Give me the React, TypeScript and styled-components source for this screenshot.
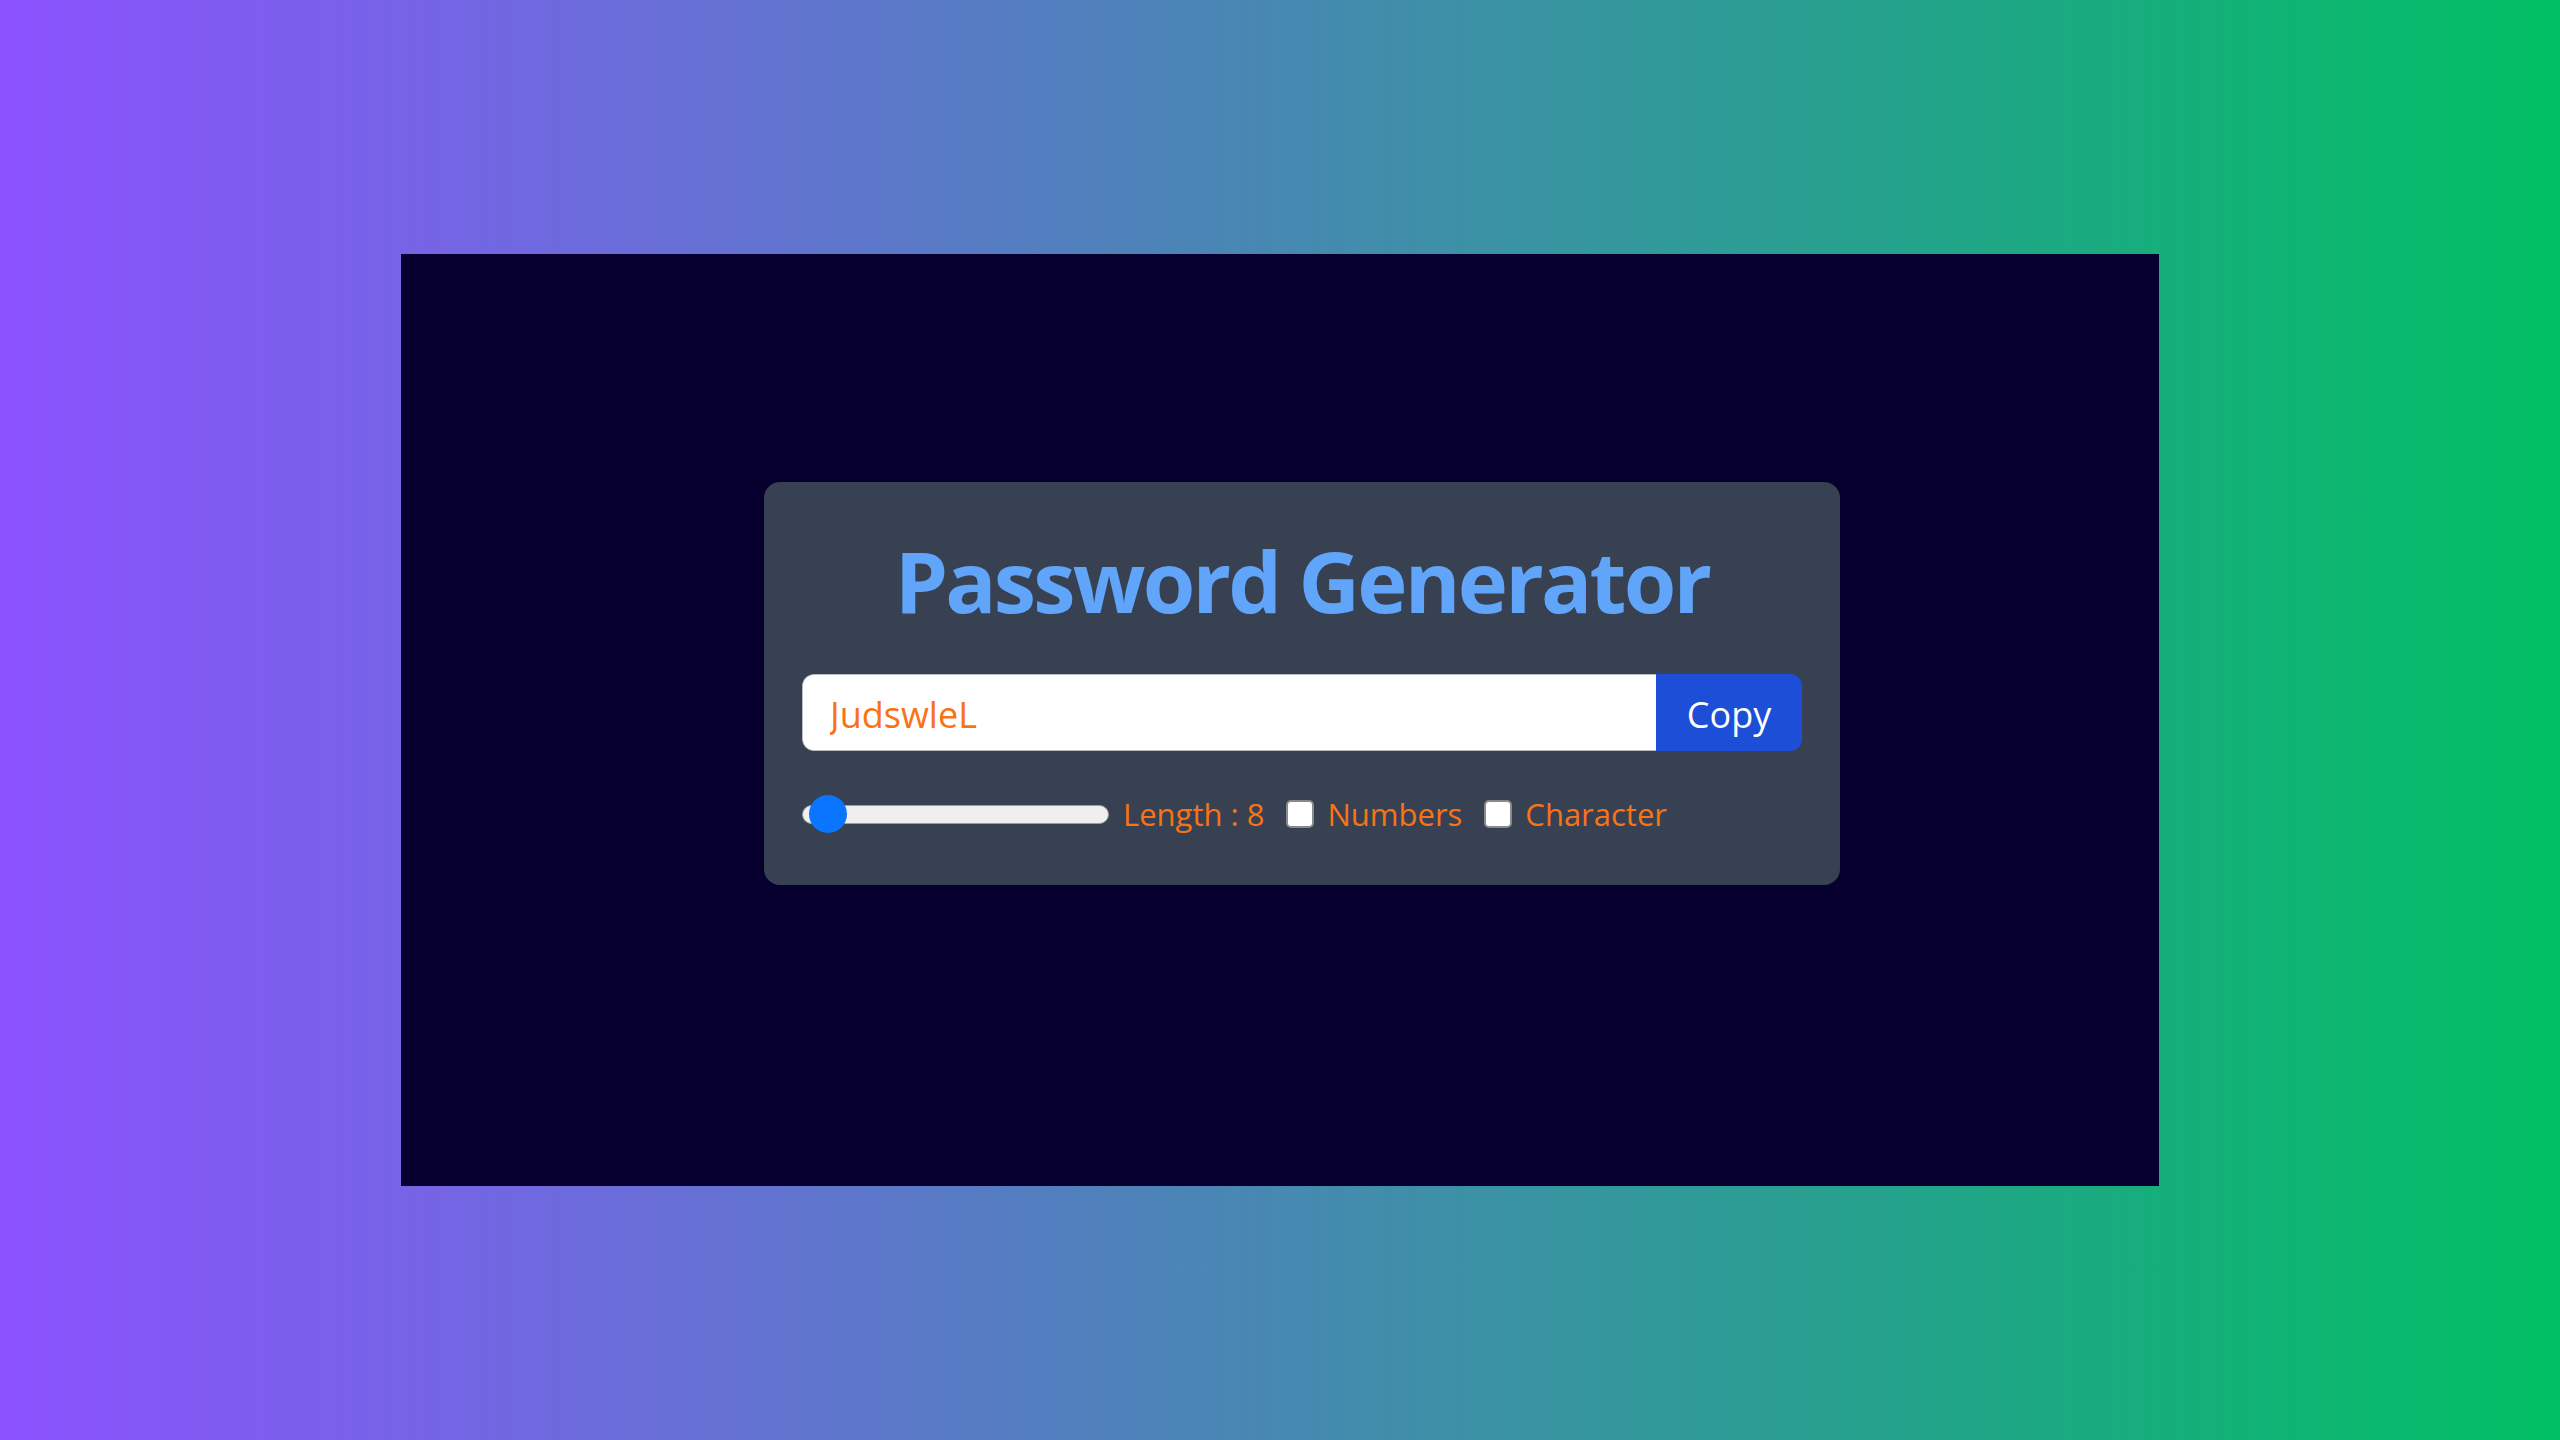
import React from "react";
import styled, { createGlobalStyle } from "styled-components";

const GlobalStyle = createGlobalStyle`
  * {
    box-sizing: border-box;
  }
  body {
    margin: 0;
    font-family: "Open Sans", "Noto Sans", sans-serif;
    background: linear-gradient(90deg, #8c52ff 0%, #00bf63 100%);
    min-height: 100vh;
  }
`;

function App() {
  const [length, setLength] = React.useState(8);
  const [numbers, setNumbers] = React.useState(false);
  const [characters, setCharacters] = React.useState(false);
  const [password] = React.useState("JudswleL");

  return (
    <Page>
      <GlobalStyle />
      <Screen>
        <Card>
          <Title>Password Generator</Title>
          <InputRow>
            <PasswordInput value={password} readOnly placeholder="Password" />
            <CopyButton>Copy</CopyButton>
          </InputRow>
          <Options>
            <Group $gap={14}>
              <Range
                type="range"
                min={6}
                max={100}
                value={length}
                onChange={(ev) => setLength(Number(ev.target.value))}
              />
              <Label>Length : {length}</Label>
            </Group>
            <Group $gap={13}>
              <Checkbox
                type="checkbox"
                id="numbers"
                checked={numbers}
                onChange={() => setNumbers((v) => !v)}
              />
              <Label as="label" htmlFor="numbers">
                Numbers
              </Label>
            </Group>
            <Group $gap={13}>
              <Checkbox
                type="checkbox"
                id="characters"
                checked={characters}
                onChange={() => setCharacters((v) => !v)}
              />
              <Label as="label" htmlFor="characters">
                Character
              </Label>
            </Group>
          </Options>
        </Card>
      </Screen>
    </Page>
  );
}

const Page = styled("div")`
  min-height: 100vh;
  display: flex;
  align-items: center;
  justify-content: center;
`;

const Screen = styled("div")`
  width: 1758px;
  height: 932px;
  background: #07002f;
  display: flex;
  align-items: flex-start;
  padding: 228px 0 0 363px;
`;

const Card = styled("div")`
  width: 1076px;
  background: #374151;
  border-radius: 16px;
  padding: 56px 38px 50px 38px;
  display: flex;
  flex-direction: column;
`;

const Title = styled("h1")`
  margin: 0;
  text-align: center;
  font-size: 85px;
  line-height: 1;
  font-weight: 700;
  letter-spacing: -2.8px;
  color: #60a5fa;
`;

const InputRow = styled("div")`
  display: flex;
  height: 77px;
  margin-top: 51px;
  border-radius: 12px;
  overflow: hidden;
`;

const PasswordInput = styled("input")`
  flex: 1;
  min-width: 0;
  border: 1px solid #bcbcbc;
  border-right: none;
  border-radius: 12px 0 0 12px;
  background: #ffffff;
  padding: 3px 27px 0 27px;
  font-family: "Open Sans", sans-serif;
  font-size: 36px;
  color: #f97316;
  outline: none;
`;

const CopyButton = styled("button")`
  width: 146px;
  border: none;
  background: #1d4ed8;
  color: #ffffff;
  font-family: "Open Sans", sans-serif;
  font-size: 36px;
  padding: 3px 0 0 0;
  cursor: pointer;
`;

const Options = styled("div")`
  display: flex;
  align-items: center;
  gap: 22px;
  margin-top: 42px;
`;

const Group = styled("div")<{ $gap: number }>`
  display: flex;
  align-items: center;
  gap: ${(p) => p.$gap}px;
`;

const Label = styled("span")`
  font-size: 31px;
  color: #f97316;
  white-space: nowrap;
`;

const Range = styled("input")`
  -webkit-appearance: none;
  appearance: none;
  width: 307px;
  height: 38px;
  margin: 0;
  background: transparent;
  cursor: pointer;

  &::-webkit-slider-runnable-track {
    height: 19px;
    background: #efefef;
    border: 1px solid #9d9d9d;
    border-radius: 10px;
  }

  &::-webkit-slider-thumb {
    -webkit-appearance: none;
    width: 38px;
    height: 38px;
    border-radius: 50%;
    background: #0a75ff;
    border: none;
    margin-top: -10.5px;
  }
`;

const Checkbox = styled("input")`
  -webkit-appearance: none;
  appearance: none;
  width: 28px;
  height: 28px;
  margin: 0;
  background: #ffffff;
  border: 2px solid #8a8a8a;
  border-radius: 5px;
  cursor: pointer;

  &:checked {
    background: #0a75ff;
    border-color: #0a75ff;
  }
`;

export default App;
